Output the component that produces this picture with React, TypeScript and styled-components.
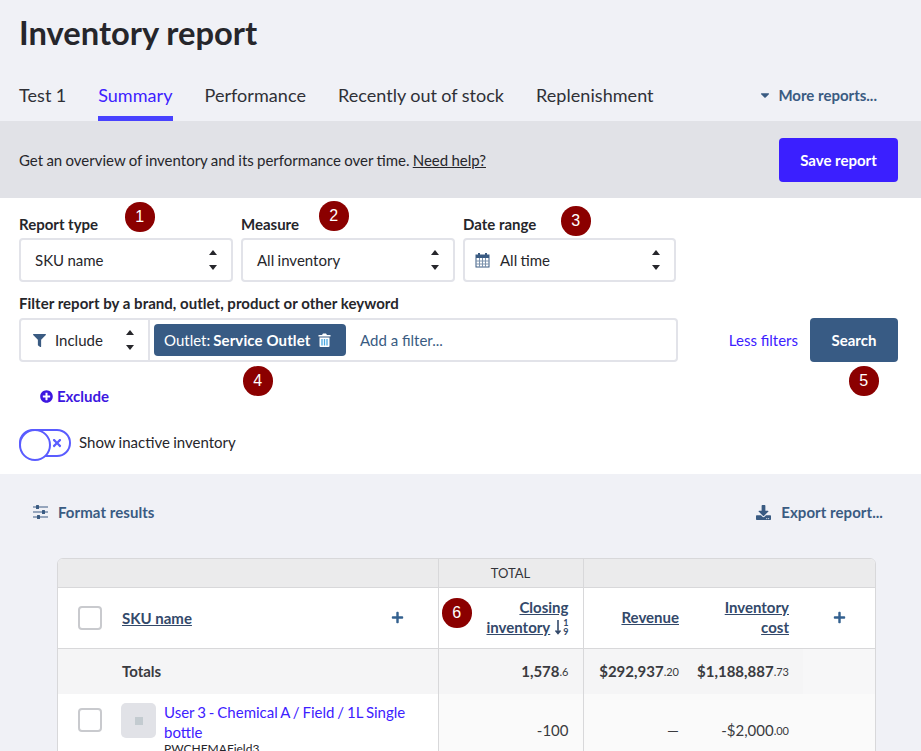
import React from "react";
import styled, { createGlobalStyle } from "styled-components";
import { FaFilter, FaPlusCircle, FaDownload, FaCaretDown, FaPlus, FaTimes } from "react-icons/fa";

const Global = createGlobalStyle`
  html, body { margin: 0; padding: 0; background: #f0f1f6; }
  * { box-sizing: border-box; }
  body { font-family: Lato, "Liberation Sans", sans-serif; color: #26262b; }
`;

const Page = styled.div`
  position: relative;
  width: 921px;
  height: 751px;
  overflow: hidden;
  background: #f0f1f6;
`;

const Header = styled.header`
  height: 121px;
  padding: 0 44px 0 19px;
  display: flex;
  flex-direction: column;
  justify-content: space-between;
`;

const Title = styled.h1`
  margin: 14px 0 0;
  font-size: 32.7px;
  line-height: 38px;
  font-weight: 700;
  color: #26262b;
`;

const TabBar = styled.nav`
  display: flex;
  align-items: stretch;
  gap: 32px;
  height: 52px;
`;

const Tab = styled.a<{ $active?: boolean }>`
  display: flex;
  align-items: center;
  height: 52px;
  padding-top: 5px;
  font-size: 18px;
  word-spacing: -0.4px;
  letter-spacing: 0.05px;
  color: ${(p) => (p.$active ? "#3d21ff" : "#2f3036")};
  border-bottom: 5px solid ${(p) => (p.$active ? "#4842ff" : "transparent")};
`;

const More = styled.a`
  margin-left: auto;
  display: flex;
  align-items: center;
  gap: 6px;
  font-size: 15px;
  font-weight: 700;
  color: #3a5b82;
  svg { font-size: 14px; }
`;

const Banner = styled.section`
  height: 77px;
  background: #e1e2e7;
  padding: 0 23px 0 19px;
  display: flex;
  align-items: center;
  justify-content: space-between;
  font-size: 15px;
  word-spacing: -0.55px;
  a { color: inherit; text-decoration: underline; }
`;

const Button = styled.button<{ $bg: string; $w: number }>`
  height: 44px;
  width: ${(p) => p.$w}px;
  border: 0;
  border-radius: 4px;
  background: ${(p) => p.$bg};
  color: #fff;
  font: 700 15px Lato, sans-serif;
`;

const Filters = styled.section`
  height: 276px;
  background: #fff;
  padding: 17px 23px 0 19px;
`;

const SelectRow = styled.div`
  display: flex;
  gap: 8px;
`;

const Field = styled.div<{ $w: number }>`
  width: ${(p) => p.$w}px;
`;

const Label = styled.div`
  font-size: 15px;
  font-weight: 700;
  line-height: 18px;
  color: #26262b;
`;

const SelectBox = styled.div`
  margin-top: 5px;
  height: 44px;
  border: 2px solid #e2e3e9;
  border-radius: 4px;
  padding: 0 14px 0 14px;
  display: flex;
  align-items: center;
  font-size: 15px;
  word-spacing: -0.5px;
`;

const CalendarIcon = styled.svg`
  width: 15px;
  height: 16px;
  margin: 0 10px 0 -4px;
  flex: none;
`;

const Grow = styled.span`
  flex: 1;
`;

const FilterLabel = styled(Label)`
  margin-top: 12px;
  letter-spacing: 0.03px;
`;

const FilterRow = styled.div`
  margin-top: 6px;
  display: flex;
  align-items: center;
`;

const FilterBox = styled.div`
  width: 659px;
  height: 44px;
  border: 2px solid #e2e3e9;
  border-radius: 4px;
  display: flex;
  align-items: center;
  font-size: 15px;
`;

const IncludePart = styled.div`
  width: 129px;
  height: 100%;
  border-right: 2px solid #e2e3e9;
  display: flex;
  align-items: center;
  padding: 0 14px 0 12px;
  svg.funnel { color: #3a5b82; font-size: 13px; margin-right: 9px; }
`;

const Chip = styled.div`
  margin-left: 4px;
  width: 192px;
  height: 32px;
  border-radius: 4px;
  background: #385b84;
  color: #fff;
  display: flex;
  align-items: center;
  padding: 0 10px;
  font-size: 15px;
  b { font-weight: 700; margin-left: 3px; letter-spacing: 0.12px; }
  svg { margin-left: 8px; flex: none; }
`;

const Placeholder = styled.span`
  margin-left: 14px;
  color: #3a5b82;
`;

const LessLink = styled.a`
  margin-left: 51px;
  margin-right: 12px;
  font-size: 15px;
  color: #3d21ff;
`;

const Exclude = styled.a`
  margin: 24px 0 0 21px;
  display: inline-flex;
  align-items: center;
  gap: 4px;
  font-size: 15px;
  font-weight: 700;
  line-height: 20px;
  color: #3d17e0;
  svg { font-size: 13px; }
`;

const ToggleRow = styled.div`
  margin-top: 23px;
  display: flex;
  align-items: center;
  gap: 8px;
  font-size: 15px;
  word-spacing: -0.5px;
`;

const ToggleText = styled.span`
  padding-bottom: 2px;
`;

const Toggle = styled.span`
  position: relative;
  width: 52px;
  height: 28px;
  border: 2px solid #5a5cff;
  border-radius: 14px;
  display: flex;
  align-items: center;
  justify-content: flex-end;
  padding-right: 6px;
  color: #5a5cff;
  font-size: 12px;
  &::before {
    content: "";
    position: absolute;
    left: -2px;
    top: -2px;
    width: 28px;
    height: 28px;
    border: 2px solid #5a5cff;
    border-radius: 50%;
    background: #fff;
  }
`;

const Results = styled.section`
  padding: 0 38px 0 33px;
`;

const ResultsBar = styled.div`
  height: 84px;
  padding: 0 0 8px;
  display: flex;
  align-items: center;
  justify-content: space-between;
`;

const ActionLink = styled.a`
  display: flex;
  align-items: center;
  gap: 10px;
  font-size: 15px;
  font-weight: 700;
  letter-spacing: 0.06px;
  color: #3a5b82;
  svg { font-size: 15px; flex: none; }
`;

const TableFrame = styled.div`
  margin-left: 24px;
  width: 819px;
  border: 1px solid #d8d8da;
  border-radius: 6px 6px 0 0;
  overflow: hidden;
  background: #fff;
`;

const Table = styled.table`
  width: 100%;
  border-collapse: collapse;
  table-layout: fixed;
  font-size: 15px;
  color: #3a3b40;
`;

const GroupCell = styled.th<{ $divide?: boolean }>`
  height: 28px;
  background: #ebebec;
  font-size: 13px;
  font-weight: 400;
  color: #33343a;
  text-align: center;
  border-left: ${(p) => (p.$divide ? "1px solid #d8d8da" : "0")};
  border-bottom: 1px solid #d8d8da;
  padding: 0;
`;

const HeadCell = styled.th<{ $divide?: boolean }>`
  height: 61px;
  font-weight: 400;
  text-align: right;
  line-height: 20px;
  padding: 0 14px 2px 0;
  border-left: ${(p) => (p.$divide ? "1px solid #d8d8da" : "0")};
  border-bottom: 1px solid #d8d8da;
  u { color: #33496a; font-weight: 700; }
`;

const SkuHead = styled.div`
  display: flex;
  align-items: center;
  height: 100%;
  padding-left: 20px;
  padding-top: 2px;
  u { margin-left: 20px; }
`;

const CheckBox = styled.span`
  width: 24px;
  height: 24px;
  flex: none;
  border: 2px solid #c9cace;
  border-radius: 4px;
  background: #fff;
`;

const PlusIcon = styled(FaPlus)`
  color: #33608f;
  font-size: 13px;
`;

const PlusWrap = styled.span`
  margin-left: auto;
  margin-right: 20px;
  display: flex;
`;

const PlusCenter = styled.div`
  display: flex;
  justify-content: center;
  margin-right: -14px;
  padding-top: 2px;
`;

const SortMark = styled.span`
  display: inline-flex;
  align-items: center;
  margin-left: 4px;
  vertical-align: -2px;
  color: #33496a;
`;

const SortDigits = styled.span`
  display: inline-flex;
  flex-direction: column;
  font-size: 9px;
  font-weight: 700;
  line-height: 9px;
  margin-left: 1px;
`;

const TotalCell = styled.td<{ $divide?: boolean; $align?: string; $light?: boolean }>`
  height: 46px;
  background: ${(p) => (p.$light ? "#f7f7f8" : "#f5f5f6")};
  font-weight: 700;
  text-align: ${(p) => p.$align || "right"};
  padding: ${(p) => (p.$align ? "0 0 0 64px" : "0 14px 0 0")};
  border-left: ${(p) => (p.$divide ? "1px solid #d8d8da" : "0")};
  small { font-size: 11px; font-weight: 400; vertical-align: 1px; }
`;

const DataCell = styled.td<{ $divide?: boolean }>`
  height: 72px;
  background: #fafafa;
  text-align: right;
  padding: 0 14px 0 0;
  border-left: ${(p) => (p.$divide ? "1px solid #d8d8da" : "0")};
  small { font-size: 11px; vertical-align: 1px; }
`;

const NameCell = styled.td`
  height: 72px;
  background: #fff;
  padding: 0;
  vertical-align: top;
`;

const ProductRow = styled.div`
  display: flex;
  align-items: flex-start;
  padding: 8px 20px 0 20px;
`;

const RowCheck = styled(CheckBox)`
  margin-top: 6px;
`;

const Thumb = styled.span`
  width: 35px;
  height: 35px;
  flex: none;
  margin: 1px 8px 0 19px;
  border-radius: 5px;
  background: #e1e2e7;
  display: flex;
  align-items: center;
  justify-content: center;
  &::after {
    content: "";
    width: 8px;
    height: 8px;
    background: #c3cbd0;
  }
`;

const ProductName = styled.a`
  display: block;
  color: #3d21ff;
  line-height: 20px;
  word-spacing: -0.9px;
`;

const Sku = styled.div`
  font-size: 12px;
  line-height: 14px;
  color: #26262b;
`;

const Badge = styled.span<{ $x: number; $y: number }>`
  position: absolute;
  left: ${(p) => p.$x}px;
  top: ${(p) => p.$y}px;
  width: 29.5px;
  height: 29.5px;
  border-radius: 50%;
  background: #8b0000;
  color: #fff;
  display: flex;
  align-items: center;
  justify-content: center;
  font-family: "Liberation Sans", Arial, sans-serif;
  font-size: 16px;
`;

const Chevrons = () => (
  <svg width="8" height="20" viewBox="0 0 8 20" fill="#26262b">
    <path d="M4 0 L8 5 H0 Z" />
    <path d="M4 20 L8 15 H0 Z" />
  </svg>
);

const Calendar = () => (
  <CalendarIcon viewBox="0 0 15 16" fill="none">
    <rect x="1" y="3" width="13" height="12" fill="#fff" stroke="#3a5b82" />
    <rect x="1" y="3" width="13" height="3" fill="#3a5b82" />
    <path d="M1 9 H14 M1 12 H14 M4.5 6 V15 M7.5 6 V15 M10.5 6 V15" stroke="#7d93ad" />
    <path d="M4 1 V4 M11 1 V4" stroke="#3a5b82" strokeWidth="2" />
  </CalendarIcon>
);

const Trash = () => (
  <svg width="13" height="14" viewBox="0 0 13 14">
    <path d="M0.5 2 H4 L5 .5 H8 L9 2 H12.5 V3.5 H.5 Z" fill="#fff" />
    <path d="M1.5 4.5 H11.5 V13 Q11.5 14 10.5 14 H2.5 Q1.5 14 1.5 13 Z" fill="#fff" />
    <path d="M4 6 V12.5 M6.5 6 V12.5 M9 6 V12.5" stroke="#4aa8e0" strokeWidth="1.3" />
  </svg>
);

const Sliders = () => (
  <svg width="15" height="14" viewBox="0 0 15 14" fill="#3a5b82">
    <path d="M0 1.5 H15 V2.5 H0 Z M0 6.5 H15 V7.5 H0 Z M0 11.5 H15 V12.5 H0 Z" />
    <rect x="3" y="0" width="3" height="4" rx=".5" />
    <rect x="9" y="5" width="3" height="4" rx=".5" />
    <rect x="4" y="10" width="3" height="4" rx=".5" />
  </svg>
);

const badges = [
  [125, 202],
  [319, 201],
  [561, 206],
  [243, 366],
  [849, 366],
  [442, 598],
];

export default function App() {
  return (
    <Page>
      <Global />
      <Header>
        <Title>Inventory report</Title>
        <TabBar>
          <Tab>Test 1</Tab>
          <Tab $active>Summary</Tab>
          <Tab>Performance</Tab>
          <Tab>Recently out of stock</Tab>
          <Tab>Replenishment</Tab>
          <More>
            <FaCaretDown />
            More reports...
          </More>
        </TabBar>
      </Header>
      <Banner>
        <span>
          Get an overview of inventory and its performance over time. <a>Need help?</a>
        </span>
        <Button $bg="#3b1fff" $w={119}>Save report</Button>
      </Banner>
      <Filters>
        <SelectRow>
          <Field $w={214}>
            <Label>Report type</Label>
            <SelectBox>
              <Grow>SKU name</Grow>
              <Chevrons />
            </SelectBox>
          </Field>
          <Field $w={214}>
            <Label>Measure</Label>
            <SelectBox>
              <Grow>All inventory</Grow>
              <Chevrons />
            </SelectBox>
          </Field>
          <Field $w={213}>
            <Label>Date range</Label>
            <SelectBox>
              <Calendar />
              <Grow>All time</Grow>
              <Chevrons />
            </SelectBox>
          </Field>
        </SelectRow>
        <FilterLabel>Filter report by a brand, outlet, product or other keyword</FilterLabel>
        <FilterRow>
          <FilterBox>
            <IncludePart>
              <FaFilter className="funnel" />
              <Grow>Include</Grow>
              <Chevrons />
            </IncludePart>
            <Chip>
              Outlet:<b>Service Outlet</b>
              <Trash />
            </Chip>
            <Placeholder>Add a filter...</Placeholder>
          </FilterBox>
          <LessLink>Less filters</LessLink>
          <Button $bg="#385b84" $w={88}>Search</Button>
        </FilterRow>
        <Exclude>
          <FaPlusCircle />
          Exclude
        </Exclude>
        <ToggleRow>
          <Toggle>
            <FaTimes />
          </Toggle>
          <ToggleText>Show inactive inventory</ToggleText>
        </ToggleRow>
      </Filters>
      <Results>
        <ResultsBar>
          <ActionLink>
            <Sliders />
            Format results
          </ActionLink>
          <ActionLink>
            <FaDownload />
            Export report...
          </ActionLink>
        </ResultsBar>
        <TableFrame>
          <Table>
            <colgroup>
              <col style={{ width: 380 }} />
              <col style={{ width: 145 }} />
              <col style={{ width: 110 }} />
              <col style={{ width: 110 }} />
              <col />
            </colgroup>
            <thead>
              <tr>
                <GroupCell />
                <GroupCell $divide>TOTAL</GroupCell>
                <GroupCell $divide colSpan={3} />
              </tr>
              <tr>
                <HeadCell>
                  <SkuHead>
                    <CheckBox />
                    <u>SKU name</u>
                    <PlusWrap>
                      <PlusIcon />
                    </PlusWrap>
                  </SkuHead>
                </HeadCell>
                <HeadCell $divide>
                  <u>Closing</u>
                  <br />
                  <u>inventory</u>
                  <SortMark>
                    <svg width="8" height="16" viewBox="0 0 8 16" fill="none" stroke="currentColor" strokeWidth="1.6">
                      <path d="M4 1 V14 M1.5 11.5 L4 14.5 L6.5 11.5" />
                    </svg>
                    <SortDigits>
                      <span>1</span>
                      <span>9</span>
                    </SortDigits>
                  </SortMark>
                </HeadCell>
                <HeadCell $divide>
                  <u>Revenue</u>
                </HeadCell>
                <HeadCell>
                  <u>Inventory</u>
                  <br />
                  <u>cost</u>
                </HeadCell>
                <HeadCell>
                  <PlusCenter>
                    <PlusIcon />
                  </PlusCenter>
                </HeadCell>
              </tr>
            </thead>
            <tbody>
              <tr>
                <TotalCell $align="left">Totals</TotalCell>
                <TotalCell $divide>
                  1,578<small>.6</small>
                </TotalCell>
                <TotalCell $divide>
                  $292,937<small>.20</small>
                </TotalCell>
                <TotalCell>
                  $1,188,887<small>.73</small>
                </TotalCell>
                <TotalCell $light />
              </tr>
              <tr>
                <NameCell>
                  <ProductRow>
                    <RowCheck />
                    <Thumb />
                    <div>
                      <ProductName>User 3 - Chemical A / Field / 1L Single bottle</ProductName>
                      <Sku>PWCHEMAField3</Sku>
                    </div>
                  </ProductRow>
                </NameCell>
                <DataCell $divide>-100</DataCell>
                <DataCell $divide>—</DataCell>
                <DataCell>
                  -$2,000<small>.00</small>
                </DataCell>
                <DataCell />
              </tr>
            </tbody>
          </Table>
        </TableFrame>
      </Results>
      {badges.map(([x, y], i) => (
        <Badge key={i} $x={x} $y={y}>
          {i + 1}
        </Badge>
      ))}
    </Page>
  );
}
